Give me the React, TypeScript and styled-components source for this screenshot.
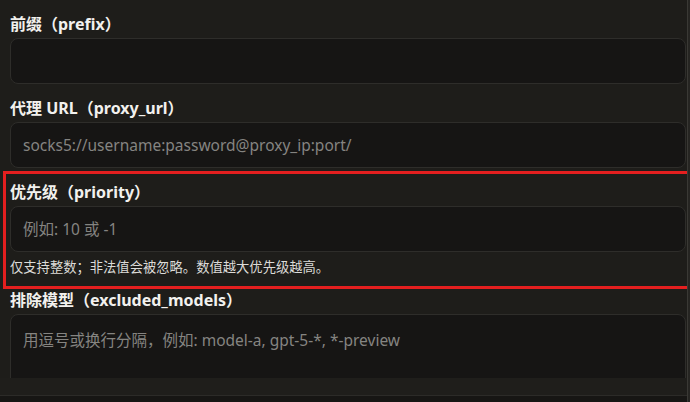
import styled, { createGlobalStyle } from 'styled-components';

const GlobalStyle = createGlobalStyle`
  html, body {
    margin: 0;
    padding: 0;
    background: #1e1d1a;
  }
  body {
    font-family: "Noto Sans", "Noto Sans CJK SC", sans-serif;
    color: #f0efec;
  }
  * { box-sizing: border-box; }
`;

const Frame = styled.div`
  display: flex;
  width: 690px;
  height: 402px;
  overflow: hidden;
`;

const Main = styled.div`
  flex: 1;
  display: flex;
  flex-direction: column;
  min-width: 0;
`;

const Scroller = styled.div`
  height: 378px;
  overflow: hidden;
  padding: 14px 1px 0 10px;
`;

const Fields = styled.div`
  display: flex;
  flex-direction: column;
  gap: 14px;
`;

const Field = styled.div<{ $highlight?: boolean }>`
  position: relative;
  display: flex;
  flex-direction: column;

  ${p =>
    p.$highlight &&
    `
    &::after {
      content: '';
      position: absolute;
      top: -11px;
      left: -7px;
      right: -10px;
      bottom: -13px;
      border: 3px solid #e41f1f;
      pointer-events: none;
    }
  `}
`;

const Label = styled.label`
  font-size: 16px;
  font-weight: 700;
  line-height: 20px;
  margin-bottom: 4px;
  color: #f2f1ee;
`;

const Input = styled.input`
  height: 46px;
  width: 100%;
  padding: 0 12px;
  font: inherit;
  font-size: 15.5px;
  color: #e8e7e4;
  background: #161514;
  border: 1px solid #2e2d2a;
  border-radius: 8px;
  outline: none;

  &::placeholder {
    color: #858481;
  }
`;

const TextArea = styled.textarea`
  height: 90px;
  width: 100%;
  padding: 14px 12px;
  font: inherit;
  font-size: 15.5px;
  line-height: 22px;
  color: #e8e7e4;
  background: #161514;
  border: 1px solid #2e2d2a;
  border-radius: 8px;
  outline: none;
  resize: none;

  &::placeholder {
    color: #858481;
  }
`;

const Help = styled.div`
  margin-top: 6px;
  font-size: 13.3px;
  line-height: 18px;
  color: #dcdbd8;
`;

const FooterGap = styled.div`
  height: 17px;
  background: #1f1e1b;
`;

const Footer = styled.div`
  flex: 1;
  background: #171614;
  border-top: 1px solid #2c2b28;
`;

const Scrollbar = styled.div`
  width: 3px;
  border-left: 1px solid #3a3935;
  background: #262522;
`;

export default function App() {
  return (
    <>
      <GlobalStyle />
      <Frame>
        <Main>
          <Scroller>
            <Fields>
              <Field>
                <Label>前缀（prefix）</Label>
                <Input />
              </Field>
              <Field>
                <Label>代理 URL（proxy_url）</Label>
                <Input placeholder="socks5://username:password@proxy_ip:port/" />
              </Field>
              <Field $highlight>
                <Label>优先级（priority）</Label>
                <Input placeholder="例如: 10 或 -1" />
                <Help>仅支持整数；非法值会被忽略。数值越大优先级越高。</Help>
              </Field>
              <Field>
                <Label>排除模型（excluded_models）</Label>
                <TextArea placeholder="用逗号或换行分隔，例如: model-a, gpt-5-*, *-preview" />
              </Field>
            </Fields>
          </Scroller>
          <FooterGap />
          <Footer />
        </Main>
        <Scrollbar />
      </Frame>
    </>
  );
}
